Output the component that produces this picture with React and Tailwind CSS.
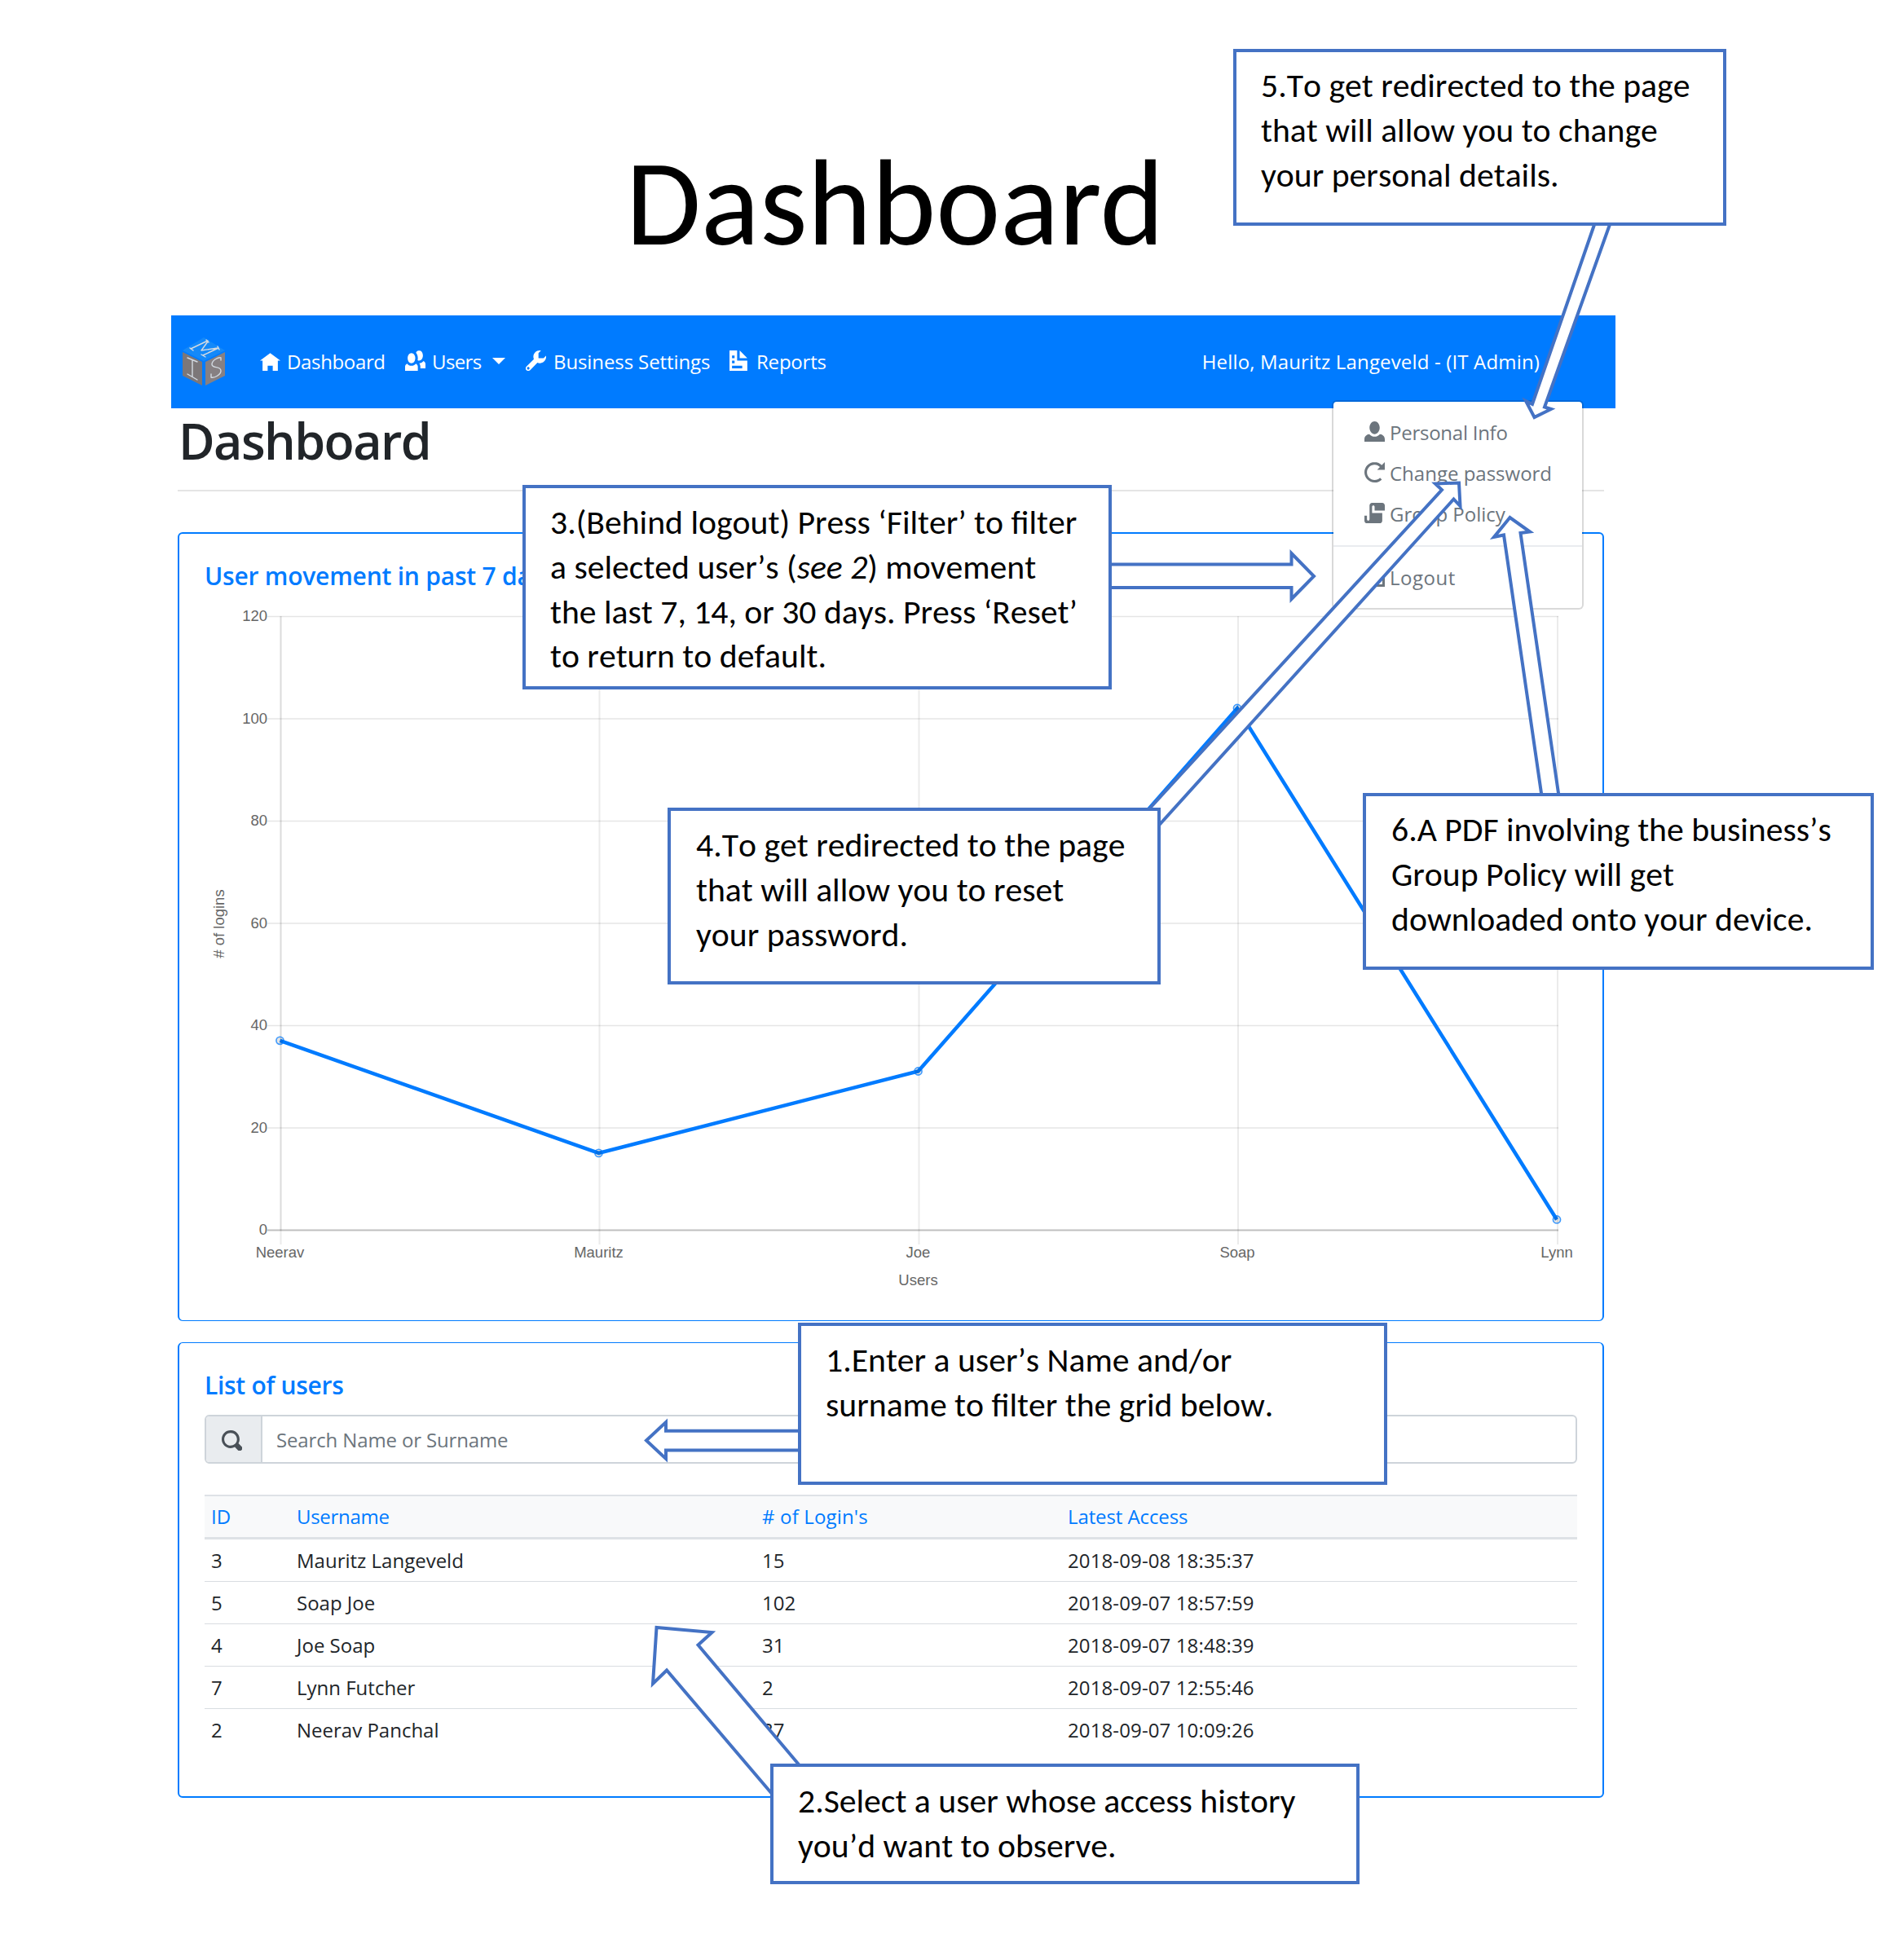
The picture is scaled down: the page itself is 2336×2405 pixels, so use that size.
import React from "react";

const ICONS = {
  home: "M4 1l-4 3h1v4h2v-2h2v2h2v-4.03l1 .03-4-3z",
  people:
    "M5.5 0c-.51 0-.95.35-1.22.88.45.54.72 1.28.72 2.13 0 .29-.03.55-.09.81.19.11.38.19.59.19.83 0 1.5-.9 1.5-2s-.67-2-1.5-2zm-3 1c-.83 0-1.5.9-1.5 2s.67 2 1.5 2 1.5-.9 1.5-2-.67-2-1.5-2zm4.75 3.16c-.43.51-1.02.82-1.69.84.27.38.44.84.44 1.34v.66h2v-1.66c0-.52-.31-.97-.75-1.19zm-6.5 1c-.44.22-.75.67-.75 1.19v1.66h5v-1.66c0-.52-.31-.97-.75-1.19-.45.53-1.06.84-1.75.84s-1.3-.32-1.75-.84z",
  wrench:
    "M5.5 0c-1.38 0-2.5 1.12-2.5 2.5 0 .32.08.62.19.91l-2.91 2.88c-.39.39-.39 1.05 0 1.44.2.2.46.28.72.28.26 0 .52-.09.72-.28l2.88-2.91c.28.11.58.19.91.19 1.38 0 2.5-1.12 2.5-2.5 0-.16 0-.32-.03-.47l-.97.97h-2v-2l.97-.97c-.15-.03-.31-.03-.47-.03zm-4.5 6.5c.28 0 .5.22.5.5s-.22.5-.5.5-.5-.22-.5-.5.22-.5.5-.5z",
  document:
    "M0 0v8h7v-4h-4v-4h-3zm4 0v3h3l-3-3zm-3 2h1v1h-1v-1zm0 2h1v1h-1v-1zm0 2h4v1h-4v-1z",
  person:
    "M4 0c-1.1 0-2 1.12-2 2.5s.9 2.5 2 2.5 2-1.12 2-2.5-.9-2.5-2-2.5zm-2.09 5c-1.06.05-1.91.92-1.91 2v1h8v-1c0-1.08-.84-1.95-1.91-2-.54.61-1.28 1-2.09 1-.81 0-1.55-.39-2.09-1z",
  reload:
    "M4 0c-2.2 0-4 1.8-4 4s1.8 4 4 4c1.1 0 2.12-.43 2.84-1.16l-.72-.72c-.54.54-1.29.88-2.13.88-1.66 0-3-1.34-3-3s1.34-3 3-3c.83 0 1.55.36 2.09.91l-1.09 1.09h3v-3l-1.19 1.19c-.72-.72-1.71-1.19-2.81-1.19z",
  script:
    "M3 0c-.55 0-1 .45-1 1v5.5c0 .28-.22.5-.5.5s-.5-.22-.5-.5v-1.5h-1v2c0 .55.45 1 1 1h5c.55 0 1-.45 1-1v-3h-4v-2.5c0-.28.22-.5.5-.5s.5.22.5.5v1.5h4v-2c0-.55-.45-1-1-1h-4z",
  logout: "M3 0v1h4v6h-4v1h5v-8h-5zm-1 2l-2 2 2 2v-1.5h4v-1h-4v-1.5z",
  search:
    "M3.5 0c-1.93 0-3.5 1.57-3.5 3.5s1.57 3.5 3.5 3.5c.59 0 1.17-.14 1.66-.41a1 1 0 0 0 .13.13l1 1a1.02 1.02 0 1 0 1.44-1.44l-1-1a1 1 0 0 0-.16-.13c.27-.49.44-1.06.44-1.66 0-1.93-1.55-3.5-3.5-3.5zm0 1c1.39 0 2.5 1.11 2.5 2.5 0 .66-.24 1.27-.66 1.72-.01.01-.02.02-.03.03a1 1 0 0 0-.13.13c-.44.4-1.04.63-1.69.63-1.39 0-2.5-1.11-2.5-2.5s1.11-2.5 2.5-2.5z",
};

function Icon({ name, className = "" }) {
  return (
    <svg viewBox="0 0 8 8" className={`size-[25px] shrink-0 fill-current ${className}`} aria-hidden="true">
      <path d={ICONS[name]} />
    </svg>
  );
}

function Logo() {
  return (
    <svg viewBox="0 0 54 62" className="h-[62px] w-[54px] shrink-0" aria-label="MIS">
      <polygon points="27,1 53,17 27,30 1,17" fill="#1489f9" />
      <polygon points="1,19 25,31 25,60 1,48" fill="#7c7779" />
      <polygon points="53,19 29,31 29,60 53,48" fill="#868083" />
      <g fill="none" stroke="#d3dae2" strokeWidth="1.4" strokeLinejoin="round" strokeLinecap="round">
        <path d="M10 14L14 17M11 15L32 5M30 4L33 7M32 6L24 17L44 14M44 12L46 16M45 14L26 23M24 22L29 25" />
        <path d="M7 26L19 31M13 29V49M7 46L19 53" />
        <path d="M48 29V26C45 25 37 29 37 34C37 40 48 35 48 42C48 47 40 51 36 50V46" />
      </g>
    </svg>
  );
}

function NavLink({ icon, label, className = "", textClass = "", children }) {
  return (
    <a className={`flex shrink-0 items-center ${className}`}>
      <Icon name={icon} className="mb-[3px]" />
      <span className={textClass}>{label}</span>
      {children}
    </a>
  );
}

function MenuItem({ icon, label, className = "" }) {
  return (
    <a className="flex h-[50px] items-center pl-[38px]">
      <Icon name={icon} className="mb-[3px]" />
      <span className={`ml-1.5 ${className}`}>{label}</span>
    </a>
  );
}

function UserMenu() {
  return (
    <div className="absolute top-[104px] left-[1424px] z-10 h-[257px] w-[309px] rounded-md border-2 border-black/15 bg-white bg-clip-padding pt-[13px] text-[#6c757d]">
      <MenuItem icon="person" label="Personal Info" className="tracking-[-0.25px]" />
      <MenuItem icon="reload" label="Change password" />
      <MenuItem icon="script" label="Group Policy" />
      <div className="my-[13px] h-0.5 bg-[#e9ecef]" />
      <MenuItem icon="logout" label="Logout" className="tracking-[0.5px]" />
    </div>
  );
}

function Navbar() {
  return (
    <nav className="relative flex h-[114px] items-center bg-[#007bff] pr-[93px] pl-[13px] text-white">
      <Logo />
      <div className="ml-[42px] flex">
        <NavLink icon="home" label="Dashboard" className="w-[178px]" textClass="ml-2 tracking-[-0.35px]" />
        <NavLink icon="people" label="Users" className="w-[148px]" textClass="ml-2 tracking-[-0.6px]">
          <span className="mb-0.5 ml-[13px] border-x-8 border-t-8 border-x-transparent border-t-white" />
        </NavLink>
        <NavLink icon="wrench" label="Business Settings" className="w-[250px]" textClass="ml-[9px] tracking-[-0.1px]" />
        <NavLink icon="document" label="Reports" textClass="ml-2 tracking-[-0.2px]" />
      </div>
      <span className="ml-auto tracking-[0.16px]">Hello, Mauritz Langeveld - (IT Admin)</span>
      <UserMenu />
    </nav>
  );
}

const POINTS = [
  { name: "Neerav", x: 343.5, value: 37 },
  { name: "Mauritz", x: 734.5, value: 15 },
  { name: "Joe", x: 1126.5, value: 31 },
  { name: "Soap", x: 1518, value: 102 },
  { name: "Lynn", x: 1910, value: 2 },
];
const TICKS = [0, 20, 40, 60, 80, 100, 120];
const yFor = (v) => 1509 - v * 6.275;

function Chart() {
  return (
    <svg
      viewBox="251 725 1684 890"
      className="block h-[890px] w-[1684px] font-['Liberation_Sans',sans-serif] text-[18.5px]"
      fill="#666"
    >
      {TICKS.map((t) => (
        <g key={t}>
          <line x1="328" x2="1912" y1={yFor(t) + 0.5} y2={yFor(t) + 0.5} stroke="#000" strokeOpacity={t === 0 ? 0.25 : 0.1} strokeWidth={t === 0 ? 2 : 1.5} />
          <text x="328" y={yFor(t) + 6} textAnchor="end">{t}</text>
        </g>
      ))}
      {POINTS.map((p, i) => (
        <g key={p.name}>
          <line x1={p.x + 1} x2={p.x + 1} y1="756" y2={i === 0 ? 1510 : 1527} stroke="#000" strokeOpacity={i === 0 ? 0.14 : 0.08} strokeWidth="2" />
          <text x={p.x} y="1542.5" textAnchor="middle">{p.name}</text>
        </g>
      ))}
      <line x1="344.5" x2="344.5" y1="1510" y2="1527" stroke="#000" strokeOpacity="0.08" strokeWidth="2" />
      <polyline points={POINTS.map((p) => `${p.x},${yFor(p.value)}`).join(" ")} fill="none" stroke="#007bff" strokeWidth="4.5" />
      {POINTS.map((p) => (
        <circle key={p.name} cx={p.x} cy={yFor(p.value)} r="4.6" fill="#000" fillOpacity="0.1" stroke="#007bff" strokeOpacity="0.75" strokeWidth="1.6" />
      ))}
      <text x="1126.5" y="1577" textAnchor="middle">Users</text>
      <text transform="translate(274.5 1133.5) rotate(-90)" textAnchor="middle">
        # of logins
      </text>
    </svg>
  );
}

const USERS = [
  [3, "Mauritz Langeveld", 15, "2018-09-08 18:35:37"],
  [5, "Soap Joe", 102, "2018-09-07 18:57:59"],
  [4, "Joe Soap", 31, "2018-09-07 18:48:39"],
  [7, "Lynn Futcher", 2, "2018-09-07 12:55:46"],
  [2, "Neerav Panchal", 37, "2018-09-07 10:09:26"],
];

function UserTable() {
  return (
    <div className="mt-[38px]">
      <div className="grid h-[55px] grid-cols-[105px_571px_375px_1fr] items-center border-t-2 border-b-3 border-[#dee2e6] bg-[#f8f9fa] pl-2 text-[#007bff]">
        <span>ID</span>
        <span className="tracking-[-0.3px]">Username</span>
        <span className="tracking-[0.15px]"># of Login's</span>
        <span className="tracking-[-0.1px]">Latest Access</span>
      </div>
      {USERS.map(([id, name, logins, date], i) => (
        <div
          key={id}
          className={`grid h-[52px] grid-cols-[105px_571px_375px_1fr] items-center pl-2 ${
            i < USERS.length - 1 ? "border-b border-[#d9dde1]" : ""
          }`}
        >
          <span>{id}</span>
          <span>{name}</span>
          <span>{logins}</span>
          <span className="tracking-[0.12px]">{date}</span>
        </div>
      ))}
    </div>
  );
}

function SearchBox() {
  return (
    <div className="mt-[18px] flex h-[60px] overflow-hidden rounded-md border-2 border-[#ced4da]">
      <div className="flex w-[69px] items-center justify-center border-r-2 border-[#ced4da] bg-[#e9ecef] text-[#495057]">
        <Icon name="search" className="mb-[-2px] ml-[-4px]" />
      </div>
      <div className="flex items-center pt-0.5 pl-[17px] tracking-[-0.14px] text-[#6c757d]">Search Name or Surname</div>
    </div>
  );
}

function Callout({ className, children }) {
  return (
    <div className={`absolute z-30 border-4 border-[#4472c4] bg-white pl-[30px] font-['Carlito','Calibri','Lato',sans-serif] text-[41.7px] leading-[54.8px] whitespace-nowrap text-black [font-kerning:none] ${className}`}>
      {children}
    </div>
  );
}

function Arrows() {
  return (
    <svg viewBox="0 0 2336 2405" className="pointer-events-none absolute inset-0 z-20 h-[2405px] w-[2336px]" fill="#fff" stroke="#4472c4" strokeWidth="4">
      <polygon points="1958,270 1880,496 1872,492 1882.5,512 1903,502 1895,499.5 1977,270" />
      <polygon points="1360,692.5 1584.5,692.5 1584.5,679 1612,707 1584.5,735 1584.5,721 1360,721" />
      <polygon points="1405,998 1769,601 1761,593.5 1790,592.5 1791.5,621 1783.5,612.5 1417,1018" />
      <polygon points="1892,980 1845,656.5 1833,659 1852.5,635 1877,652.5 1865.5,654 1913,980" />
      <polygon points="985,1755.7 817,1755.7 817,1745 793,1767.5 817,1790 817,1779.5 985,1779.5" />
      <polygon points="950,2204.5 818,2049.5 801,2066 805.5,1997 873.5,2003 856.5,2018.5 985,2171" />
    </svg>
  );
}

export default function App() {
  return (
    <div className="relative h-[2405px] w-[2336px] overflow-hidden bg-white font-['Open_Sans','Noto_Sans',sans-serif] text-[24px] leading-[36px] text-[#212529]">
      <div className="ml-[210px] w-[1772px]">
        <h1 className="h-[387px] pt-[174px] pl-1 text-center font-['Carlito','Calibri','Lato',sans-serif] text-[150px] leading-[150px] text-black">
          Dashboard
        </h1>
        <Navbar />
        <main className="pr-[14px] pl-2">
          <h2 className="pt-[9px] pl-px text-[61px] leading-[62px] font-semibold tracking-[-1.6px]">Dashboard</h2>
          <hr className="mt-[29px] border-t-2 border-black/10" />
          <section className="mt-[50px] h-[968px] rounded-md border-2 border-b border-[#007bff] pt-[34px] pl-[31px]">
            <h3 className="text-[30px] font-semibold tracking-[-0.22px] text-[#007bff]">User movement in past 7 days</h3>
            <Chart />
          </section>
          <section className="mt-[26px] h-[559px] rounded-md border-2 border-t border-[#007bff] pt-[34px] pr-[31px] pl-[31px]">
            <h3 className="text-[30px] font-semibold tracking-[-0.3px] text-[#007bff]">List of users</h3>
            <SearchBox />
            <UserTable />
          </section>
        </main>
      </div>

      <Arrows />
      <Callout className="top-[60px] left-[1513px] h-[217px] w-[605px] pt-[14px]">
        5.To get redirected to the page
        <br />
        that will allow you to change
        <br />
        your personal details.
      </Callout>
      <Callout className="top-[595px] left-[641px] h-[251px] w-[723px] pt-[15px]">
        3.(Behind logout) Press ‘Filter’ to filter
        <br />a selected user’s (<em>see 2</em>) movement
        <br />
        the last 7, 14, or 30 days. Press ‘Reset’
        <br />
        to return to default.
      </Callout>
      <Callout className="top-[991px] left-[819px] h-[217px] w-[605px] pt-[15px] pl-[31px]">
        4.To get redirected to the page
        <br />
        that will allow you to reset
        <br />
        your password.
      </Callout>
      <Callout className="top-[973px] left-[1672px] h-[217px] w-[627px] pt-[14px] pl-[31px]">
        6.A PDF involving the business’s
        <br />
        Group Policy will get
        <br />
        downloaded onto your device.
      </Callout>
      <Callout className="top-[1623px] left-[979px] h-[199px] w-[723px] pt-[15px]">
        1.Enter a user’s Name and/or
        <br />
        surname to filter the grid below.
      </Callout>
      <Callout className="top-[2164px] left-[945px] h-[148px] w-[723px] pt-[15px]">
        2.Select a user whose access history
        <br />
        you’d want to observe.
      </Callout>
    </div>
  );
}
